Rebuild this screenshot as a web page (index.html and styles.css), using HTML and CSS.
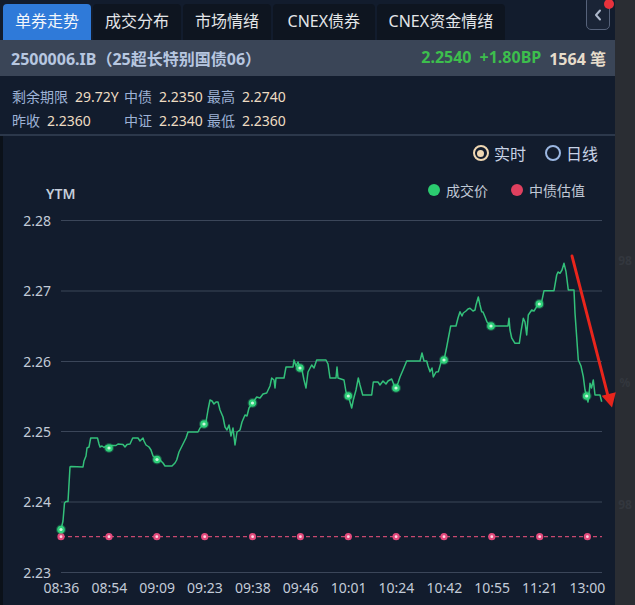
FILE: index.html
```html
<!DOCTYPE html>
<html lang="zh">
<head>
<meta charset="utf-8">
<title>单券走势</title>
<link rel="stylesheet" href="styles.css">
</head>
<body>
<div class="app">
  <div class="tabs">
    <div class="tab active">单券走势</div>
    <div class="tab">成交分布</div>
    <div class="tab">市场情绪</div>
    <div class="tab wide">CNEX债券</div>
    <div class="tab">CNEX资金情绪</div>
    <div class="collapse">
      <svg class="chev" width="8" height="12" viewBox="0 0 8 12"><polyline points="6,1.5 2,6 6,10.5" fill="none" stroke="#aeb8cb" stroke-width="2" stroke-linecap="round" stroke-linejoin="round"/></svg>
      <span class="red-dot"></span>
    </div>
  </div>
  <div class="header">
    <div class="bond-name">2500006.IB（25超长特别国债06）</div>
    <div class="quote">
      <span class="up">2.2540</span>
      <span class="up">+1.80BP</span>
      <span class="count">1564 笔</span>
    </div>
  </div>
  <div class="info">
    <div class="cell"><span class="lbl">剩余期限</span><span class="val">29.72Y</span></div>
    <div class="cell"><span class="lbl">中债</span><span class="val">2.2350</span></div>
    <div class="cell"><span class="lbl">最高</span><span class="val">2.2740</span></div>
    <div class="cell"><span class="lbl">昨收</span><span class="val">2.2360</span></div>
    <div class="cell"><span class="lbl">中证</span><span class="val">2.2340</span></div>
    <div class="cell"><span class="lbl">最低</span><span class="val">2.2360</span></div>
  </div>
  <div class="chart">
    <div class="radios">
      <label class="radio on"><span class="circle"></span>实时</label>
      <label class="radio"><span class="circle"></span>日线</label>
    </div>
    <div class="legend-row">
      <span class="ytm">YTM</span>
      <div class="legend">
        <span class="leg"><span class="ldot green"></span>成交价</span>
        <span class="leg"><span class="ldot pink"></span>中债估值</span>
      </div>
    </div>
    <svg class="plot" width="612" height="395" viewBox="3 210 612 395" xmlns="http://www.w3.org/2000/svg">
      <g class="grid" stroke="#3b4659" stroke-width="1">
        <line x1="61" y1="220.5" x2="602" y2="220.5"/>
        <line x1="61" y1="291" x2="602" y2="291"/>
        <line x1="61" y1="361.5" x2="602" y2="361.5"/>
        <line x1="61" y1="431.5" x2="602" y2="431.5"/>
        <line x1="61" y1="502" x2="602" y2="502"/>
        <line x1="61" y1="572.5" x2="602" y2="572.5"/>
      </g>
      <g class="ylabels" fill="#c3cbd8" font-size="14" text-anchor="end" dominant-baseline="central">
        <text x="51" y="220">2.28</text>
        <text x="51" y="290.5">2.27</text>
        <text x="51" y="361">2.26</text>
        <text x="51" y="431">2.25</text>
        <text x="51" y="501.5">2.24</text>
        <text x="51" y="572">2.23</text>
      </g>
      <g class="xlabels" fill="#c3cbd8" font-size="14" text-anchor="middle" dominant-baseline="central">
        <text x="61.5" y="587">08:36</text>
        <text x="109.3" y="587">08:54</text>
        <text x="157.2" y="587">09:09</text>
        <text x="205" y="587">09:23</text>
        <text x="252.9" y="587">09:38</text>
        <text x="300.7" y="587">09:46</text>
        <text x="348.6" y="587">10:01</text>
        <text x="396.4" y="587">10:24</text>
        <text x="444.3" y="587">10:42</text>
        <text x="492.1" y="587">10:55</text>
        <text x="540" y="587">11:21</text>
        <text x="587.4" y="587">13:00</text>
      </g>
      <line x1="61" y1="536.7" x2="602" y2="536.7" stroke="#c8486f" stroke-width="1.3" stroke-dasharray="4 3"/>
      <g class="pink-dots">
        <circle cx="61" cy="536.7" r="3.6"/><circle cx="109" cy="536.7" r="3.6"/><circle cx="156.8" cy="536.7" r="3.6"/><circle cx="204.7" cy="536.7" r="3.6"/><circle cx="252.6" cy="536.7" r="3.6"/><circle cx="300.4" cy="536.7" r="3.6"/><circle cx="348.3" cy="536.7" r="3.6"/><circle cx="396.1" cy="536.7" r="3.6"/><circle cx="444" cy="536.7" r="3.6"/><circle cx="491.8" cy="536.7" r="3.6"/><circle cx="539.7" cy="536.7" r="3.6"/><circle cx="587.4" cy="536.7" r="3.6"/>
      </g>
      <g class="pink-core">
        <circle cx="61" cy="536.7" r="1.4"/><circle cx="109" cy="536.7" r="1.4"/><circle cx="156.8" cy="536.7" r="1.4"/><circle cx="204.7" cy="536.7" r="1.4"/><circle cx="252.6" cy="536.7" r="1.4"/><circle cx="300.4" cy="536.7" r="1.4"/><circle cx="348.3" cy="536.7" r="1.4"/><circle cx="396.1" cy="536.7" r="1.4"/><circle cx="444" cy="536.7" r="1.4"/><circle cx="491.8" cy="536.7" r="1.4"/><circle cx="539.7" cy="536.7" r="1.4"/><circle cx="587.4" cy="536.7" r="1.4"/>
      </g>
      <polyline class="price" points="61,529.5 63,521 64.5,503 66,501.5 68,501.5 70,467 71,466.5 83,467 84,461 86,456 87,448 89,447 90.7,438 97.5,438 99,444 100,447 102,446 104,447.5 106,446 109,448 111,445.5 116,445.5 118,444 123,444.5 125,447 127,444.5 130,444 132.7,438 138,438 140,441 143,438 144,441 146,445 149,447 151,450 153,456 157,459.5 160,460 163,463 165,466 172,466 175,463 176.7,460 179,452 182,446 186,438 188,432 198,432 200,428 202,426 204,424 206,422 208,410 210,400 212,401 214,404 216,402 218,402 220,410 223,417 225,427 227,430 229,425 231,436 233,428 235,445 237,432 240,430 242,422 245,415 247,416 249,408 252.5,403 256.7,397 260,398 263,394 266.7,393 270,386 271.7,378 274,380 275,388 276,378 284,378 286,367 293,367 294,360 296,366 298,362 300,368 302,370 304,380 306,388 308,372 311.7,365 314,368 316.7,360 326,360 328,364 330,378 336,378 337,367 338,378 344,380 346,392 348.3,396 350,402 351.7,408 353.3,400 356,390 358.3,378 360,385 362.7,395 371.7,395 373.3,382 378,382 380,385 383,381 386,384 388,381 391.7,379 394,385 396,388 398,383 400,377 403,370 406.7,361 420,361 422,353 424,361 426.7,361 428,366 430,371.7 432,368 433.3,377 436,372 438.3,371.7 440,366 441.7,360 444,360 446.7,347 448,340 450.7,326 456,326 458,318 460,311.7 462,316 463.3,313 466,311 468,309 470,308.3 473,311 475,310 476,305 478.3,297 480,305 481.7,311.7 483,312 485,316.7 487,322 491,326 508,326 509,318.3 510,330 511.7,338 515,343.3 519.3,343.3 521,331.7 523.3,318.3 525,322 526.7,335 528.3,315 531.7,310 534,311 536.7,306.7 539.3,304 541.7,301.7 544,290.7 554,290.7 556.7,275 558,272 560,273.3 562,270 564,263.3 566,271.7 568.3,290 574,290 575,313 578.3,360 581,366 583.3,376.7 585,390 586.7,396 588,402 589,395 590,383.3 591.5,388 593.3,380 595,395 600,395 601.7,401.7"/>
      <g class="green-glow">
        <circle cx="61" cy="529.5" r="5"/><circle cx="109" cy="448" r="5"/><circle cx="157" cy="459.5" r="5"/><circle cx="204" cy="424" r="5"/><circle cx="252.5" cy="403" r="5"/><circle cx="300" cy="368" r="5"/><circle cx="348.3" cy="396" r="5"/><circle cx="396" cy="388" r="5"/><circle cx="444" cy="360" r="5"/><circle cx="491" cy="326" r="5"/><circle cx="539.3" cy="304" r="5"/><circle cx="586.7" cy="396" r="5"/>
      </g>
      <g class="green-dots">
        <circle cx="61" cy="529.5" r="3.8"/><circle cx="109" cy="448" r="3.8"/><circle cx="157" cy="459.5" r="3.8"/><circle cx="204" cy="424" r="3.8"/><circle cx="252.5" cy="403" r="3.8"/><circle cx="300" cy="368" r="3.8"/><circle cx="348.3" cy="396" r="3.8"/><circle cx="396" cy="388" r="3.8"/><circle cx="444" cy="360" r="3.8"/><circle cx="491" cy="326" r="3.8"/><circle cx="539.3" cy="304" r="3.8"/><circle cx="586.7" cy="396" r="3.8"/>
      </g>
      <g class="green-core">
        <circle cx="61" cy="529.5" r="1.6"/><circle cx="109" cy="448" r="1.6"/><circle cx="157" cy="459.5" r="1.6"/><circle cx="204" cy="424" r="1.6"/><circle cx="252.5" cy="403" r="1.6"/><circle cx="300" cy="368" r="1.6"/><circle cx="348.3" cy="396" r="1.6"/><circle cx="396" cy="388" r="1.6"/><circle cx="444" cy="360" r="1.6"/><circle cx="491" cy="326" r="1.6"/><circle cx="539.3" cy="304" r="1.6"/><circle cx="586.7" cy="396" r="1.6"/>
      </g>
      <g class="arrow">
        <line x1="572" y1="256" x2="608" y2="396" stroke="#e8251c" stroke-width="3" stroke-linecap="round"/>
        <polygon points="612,407.5 601.6,395.8 615.8,392.2" fill="#e8251c"/>
      </g>
    </svg>
  </div>
</div>
<div class="watermark">
  <span>98</span><span>%</span><span>98</span>
</div>
</body>
</html>
```

FILE: styles.css
```css
* { box-sizing: border-box; }

html, body {
  margin: 0;
  padding: 0;
}

body {
  width: 635px;
  height: 605px;
  background: #2a2d33;
  font-family: "Noto Sans", "Noto Sans CJK SC", sans-serif;
  overflow: hidden;
  display: flex;
}

.app {
  width: 615px;
  height: 605px;
  background: #121c2d;
  display: flex;
  flex-direction: column;
  flex: none;
  position: relative;
}

/* tabs */
.tabs {
  height: 40px;
  display: flex;
  align-items: flex-end;
  gap: 2px;
  padding-left: 3px;
  padding-right: 5px;
  flex: none;
}

.tab {
  height: 36px;
  line-height: 35px;
  padding: 0 12px;
  font-size: 16px;
  color: #e3e5e8;
  background: #0e1520;
  border-radius: 4px 4px 0 0;
  white-space: nowrap;
}

.tab.wide {
  padding: 0 14.5px;
}

.tab.active {
  background: #2f7ad9;
  color: #f4f7fb;
}

.collapse {
  margin-left: auto;
  align-self: flex-start;
  margin-top: -4px;
  width: 24px;
  height: 34px;
  border: 1.5px solid #56627a;
  border-radius: 5px;
  background: #1a2436;
  display: flex;
  align-items: center;
  justify-content: center;
  position: relative;
}

.chev {
  display: block;
  margin-top: 3px;
}

.red-dot {
  position: absolute;
  top: 2px;
  right: -5px;
  width: 10px;
  height: 10px;
  border-radius: 50%;
  background: #e8323c;
}

/* header */
.header {
  height: 36px;
  background: #3a4557;
  display: flex;
  align-items: center;
  justify-content: space-between;
  padding: 0 9px 0 11px;
  flex: none;
}

.bond-name {
  font-size: 16px;
  font-weight: 700;
  color: #b7c7e0;
}

.quote {
  display: flex;
  gap: 8px;
  font-size: 16px;
  font-weight: 700;
}

.up { color: #3dbe4d; }
.count { color: #e6dccb; }

/* info */
.info {
  display: grid;
  grid-template-columns: 112px 83px auto;
  grid-auto-rows: 24px;
  padding: 8px 12px 2px;
  border-bottom: 2px solid #2c384b;
  font-size: 14px;
  flex: none;
}

.cell {
  display: flex;
  align-items: center;
  white-space: nowrap;
}

.lbl {
  color: #9db2d6;
  margin-right: 7px;
}

.val {
  color: #eedcc3;
}

/* chart */
.chart {
  flex: 1;
  border-left: 3px solid #0b1119;
  display: flex;
  flex-direction: column;
}

.radios {
  height: 34px;
  display: flex;
  align-items: center;
  justify-content: flex-end;
  gap: 19px;
  padding-right: 17px;
  flex: none;
}

.radio {
  display: flex;
  align-items: center;
  gap: 5px;
  font-size: 16px;
  color: #c8d3e6;
}

.circle {
  width: 16px;
  height: 16px;
  border-radius: 50%;
  border: 2px solid #9bb7e2;
  display: flex;
  align-items: center;
  justify-content: center;
}

.radio.on .circle {
  border-color: #efd7b2;
}

.radio.on .circle::after {
  content: "";
  width: 7px;
  height: 7px;
  border-radius: 50%;
  background: #efd7b2;
}

.legend-row {
  height: 40px;
  display: flex;
  align-items: center;
  justify-content: space-between;
  padding-left: 43px;
  padding-right: 30px;
  flex: none;
}

.ytm {
  font-size: 14px;
  font-weight: 600;
  color: #c5cedb;
  padding-top: 6px;
}

.legend {
  display: flex;
  gap: 23px;
}

.leg {
  display: flex;
  align-items: center;
  gap: 6px;
  font-size: 14px;
  color: #c0c9d6;
}

.ldot {
  width: 12px;
  height: 12px;
  border-radius: 50%;
}

.ldot.green { background: #2bcb6f; }
.ldot.pink { background: #e0405f; }

.plot {
  display: block;
  overflow: visible;
  font-family: "Noto Sans", sans-serif;
}

.price {
  fill: none;
  stroke: #33c07a;
  stroke-width: 1.5;
  stroke-linejoin: round;
}

.green-glow circle { fill: rgba(47, 208, 122, 0.3); }
.green-dots circle { fill: #2fd07a; }
.green-core circle { fill: #c9f7dc; }
.pink-dots circle { fill: #e24a7c; }
.pink-core circle { fill: #ffd6e2; }

/* right strip watermark */
.watermark {
  flex: 1;
  min-width: 0;
  display: flex;
  flex-direction: column;
  justify-content: space-around;
  align-items: center;
  padding: 200px 0 40px;
  color: #33373e;
  font-size: 12px;
  font-weight: 700;
}
```
